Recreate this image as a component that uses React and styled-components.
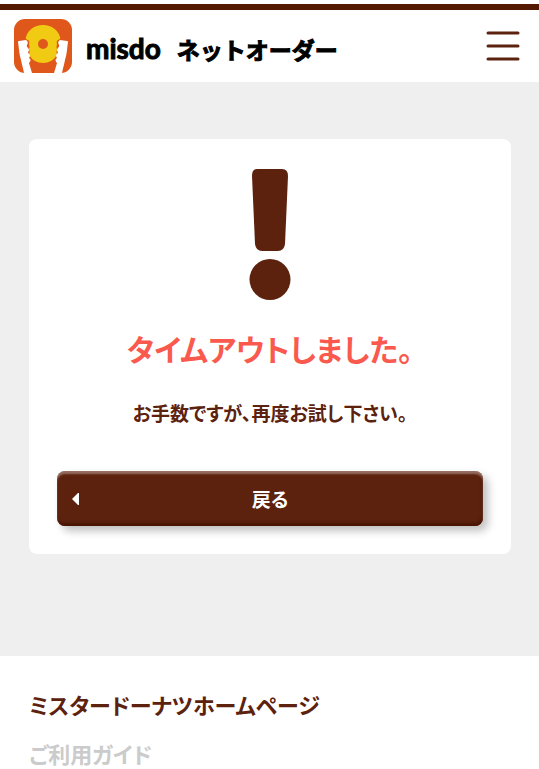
import React from "react";
import styled, { createGlobalStyle } from "styled-components";

const brown = "#5c220e";

const GlobalStyle = createGlobalStyle`
  *, *::before, *::after { box-sizing: border-box; }
  body {
    margin: 0;
    background: #fff;
    color: ${brown};
    font-family: "Noto Sans CJK JP", sans-serif;
    font-weight: 700;
    font-feature-settings: "palt";
    overflow-x: hidden;
  }
`;

const Header = styled.header`
  display: flex;
  justify-content: space-between;
  align-items: center;
  margin-top: 4px;
  padding: 0 19px 0 14px;
  height: 78px;
  border-top: 6px solid #541900;
`;

const Brand = styled.a`
  display: flex;
  align-items: center;
  gap: 14px;
  color: #000;
  text-decoration: none;

  svg { display: block; }
`;

const BrandName = styled.span`
  display: flex;
  align-items: baseline;
  gap: 16px;
  padding-top: 4px;
  line-height: 32px;
  white-space: nowrap;
  -webkit-text-stroke: 1px #000;
  stroke-linejoin: round;
`;

const Latin = styled.span`
  font-family: Lato, sans-serif;
  font-size: 28px;
`;

const Kana = styled.span`
  font-size: 23px;
  font-feature-settings: normal;
`;

const MenuButton = styled.button`
  padding: 0;
  border: 0;
  background: none;
  cursor: pointer;

  svg { display: block; }
`;

const Main = styled.main`
  padding: 57px 28px 102px 29px;
  background: #efefef;
`;

const Card = styled.section`
  display: flex;
  flex-direction: column;
  align-items: center;
  padding: 29px 28px 28px;
  border-radius: 8px;
  background: #fff;
`;

const Title = styled.h1`
  margin: 26px 0 0;
  color: #fa594e;
  font-size: 30px;
  line-height: 44px;
`;

const Message = styled.p`
  margin: 29px 0 0;
  font-size: 19px;
  line-height: 28px;
`;

const BackButton = styled.button`
  display: grid;
  grid-template-columns: 16px 1fr 16px;
  align-items: center;
  width: 100%;
  height: 55px;
  margin-top: 44px;
  padding: 0 13px;
  border: 0;
  border-radius: 8px;
  background: ${brown};
  color: #fff;
  font: inherit;
  font-size: 19px;
  font-feature-settings: inherit;
  box-shadow:
    5px 5px 8px rgba(0, 0, 0, 0.25),
    inset 0 3px 2px rgba(255, 255, 255, 0.35),
    inset -1px -3px 3px #4a1404;
  cursor: pointer;
`;

const Footer = styled.footer`
  padding: 32px 29px 0;
`;

const LinkList = styled.ul`
  display: flex;
  flex-direction: column;
  gap: 17px;
  margin: 0;
  padding: 0;
  list-style: none;
`;

const FooterLink = styled.a`
  display: block;
  color: ${(p) => (p.$muted ? "#cbcbcb" : brown)};
  font-size: 22px;
  line-height: 32px;
  text-decoration: none;
`;

const hand =
  "M4 23Q4 22 5 22L12 21Q15 23 13 26Q12 27 14 29Q16 31 14 33Q14 34 16 36Q16 38 15 39Q18 41 15 44L18 54H10C9 49 8 46 7 41C5 35 5 29 4 23Z";

const DonutLogo = () => (
  <svg width="58" height="54" viewBox="0 0 58 54" aria-hidden="true">
    <defs>
      <clipPath id="logo-tile">
        <rect width="58" height="54" rx="11" />
      </clipPath>
    </defs>
    <g clipPath="url(#logo-tile)">
      <rect width="58" height="54" fill="#df571b" />
      <path
        d="M29 6C38 6 44 11 46 18Q47 20 44 21Q42 22 43 25Q42 28 43 30Q42 33 43 36Q38 44 29 44Q20 44 15 36Q16 33 15 30Q16 28 15 25Q16 22 14 21Q11 20 12 18C14 11 20 6 29 6Z"
        fill="#f1cb13"
      />
      <circle cx="29" cy="25" r="5" fill="#df571b" />
      <path d={hand} fill="#fff" />
      <path d={hand} fill="#fff" transform="translate(58 0) scale(-1 1)" />
    </g>
  </svg>
);

const MenuIcon = () => (
  <svg width="34" height="30" viewBox="0 0 34 30" aria-hidden="true">
    <path
      d="M2 2H32M2 15H32M2 28H32"
      stroke={brown}
      strokeWidth="3"
      strokeLinecap="round"
    />
  </svg>
);

const ExclamationIcon = () => (
  <svg width="42" height="132" viewBox="0 0 42 132" aria-hidden="true">
    <path
      d="M8 1H33Q39 1 39 8L36 76Q35 83 29 83H13Q7 83 6 76L3 8Q3 1 8 1Z"
      fill={brown}
    />
    <circle cx="21" cy="111.5" r="20.5" fill={brown} />
  </svg>
);

const BackArrow = () => (
  <svg width="9" height="12" viewBox="0 0 9 12" aria-hidden="true">
    <path d="M9 0V12H8L2 6L8 0Z" fill="#fff" />
  </svg>
);

const footerLinks = [
  { label: "ミスタードーナツホームページ" },
  { label: "ご利用ガイド", muted: true },
];

export default function App() {
  return (
    <>
      <GlobalStyle />
      <Header>
        <Brand href="#">
          <DonutLogo />
          <BrandName>
            <Latin>misdo</Latin>
            <Kana>ネットオーダー</Kana>
          </BrandName>
        </Brand>
        <MenuButton type="button" aria-label="メニュー">
          <MenuIcon />
        </MenuButton>
      </Header>
      <Main>
        <Card>
          <ExclamationIcon />
          <Title>タイムアウトしました。</Title>
          <Message>お手数ですが、再度お試し下さい。</Message>
          <BackButton type="button">
            <BackArrow />
            <span>戻る</span>
          </BackButton>
        </Card>
      </Main>
      <Footer>
        <LinkList>
          {footerLinks.map((link) => (
            <li key={link.label}>
              <FooterLink href="#" $muted={link.muted}>
                {link.label}
              </FooterLink>
            </li>
          ))}
        </LinkList>
      </Footer>
    </>
  );
}
